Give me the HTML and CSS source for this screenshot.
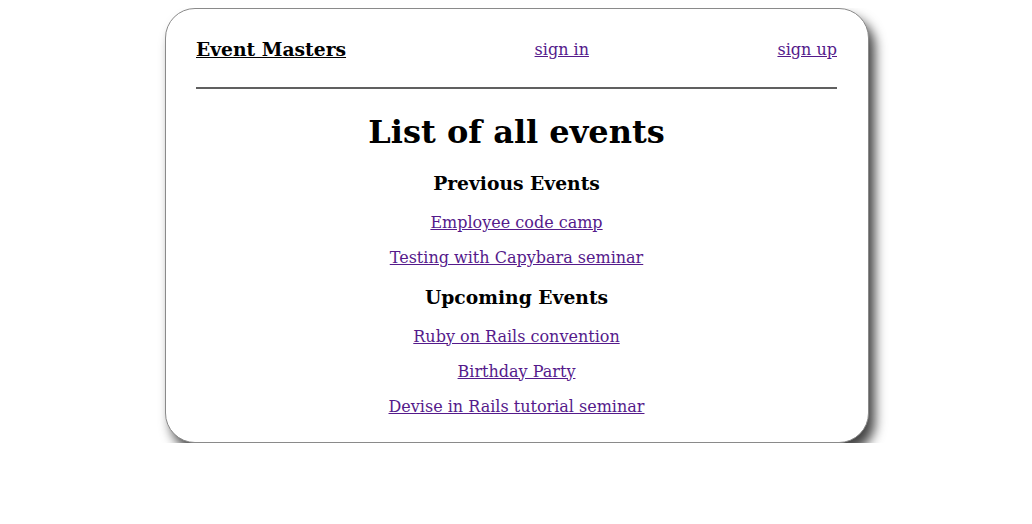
FILE: index.html
```html
<!DOCTYPE html>
<html>
<head>
<meta charset="utf-8">
<link rel="stylesheet" href="styles.css">
</head>
<body>
<div class="card">
  <nav class="nav">
    <a class="brand" href="#">Event Masters</a>
    <a class="link" href="#">sign in</a>
    <a class="link" href="#">sign up</a>
  </nav>
  <hr class="rule">
  <main class="content">
    <h1 class="title">List of all events</h1>
    <h3 class="section">Previous Events</h3>
    <p class="item"><a class="link" href="#">Employee code camp</a></p>
    <p class="item"><a class="link" href="#">Testing with Capybara seminar</a></p>
    <h3 class="section">Upcoming Events</h3>
    <p class="item"><a class="link" href="#">Ruby on Rails convention</a></p>
    <p class="item"><a class="link" href="#">Birthday Party</a></p>
    <p class="item"><a class="link" href="#">Devise in Rails tutorial seminar</a></p>
  </main>
</div>
</body>
</html>
```
FILE: styles.css
```css
html, body {
  background: #fff;
}
body {
  margin: 8px 8px 8px 10px;
  font-family: "DejaVu Serif", serif;
  font-size: 16px;
  color: #000;
}
.card {
  width: 641px;
  margin: 0 auto;
  padding: 29px 31px 10px 30px;
  border: 1px solid #8a8a8a;
  border-radius: 30px;
  box-shadow: 6px 9px 12px #444;
  background: #fff;
}
.nav {
  display: flex;
  justify-content: space-between;
  align-items: center;
  height: 22px;
}
.brand {
  color: #000;
  font-weight: bold;
  font-size: 18.72px;
}
.link {
  color: #551a8b;
}
.rule {
  margin: 27px 0 0;
  border: 0;
  border-top: 2px solid #606060;
  height: 0;
}
.content {
  text-align: center;
}
.title {
  font-size: 32px;
  margin: 24px 0 21.44px;
}
.section {
  font-size: 18.72px;
  margin: 18.72px 0;
}
.item {
  margin: 16px 0;
}
```
